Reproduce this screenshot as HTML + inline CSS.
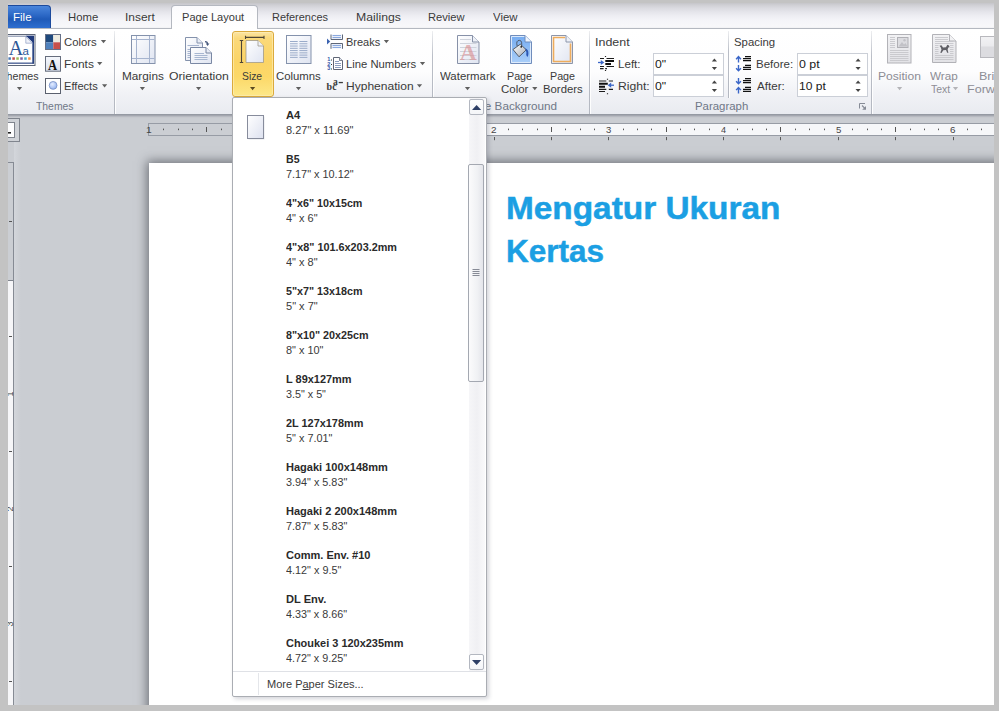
<!DOCTYPE html>
<html lang="id">
<head>
<meta charset="utf-8">
<title>Mengatur Ukuran Kertas</title>
<style>
html,body{margin:0;padding:0;}
body{width:999px;height:711px;overflow:hidden;background:#c3c3c3;font-family:"Liberation Sans",sans-serif;}
#w{position:absolute;left:0;top:0;width:999px;height:711px;overflow:hidden;background:#cacdd2;}
#w div,#w span,#w svg{position:absolute;}
.t{white-space:nowrap;line-height:1;transform-origin:0 0;z-index:5;}
.t.u{z-index:1;}
.rt{font-size:9px;color:#444;white-space:nowrap;line-height:1;z-index:1;}
#tabs{left:0;top:3px;width:999px;height:25px;background:linear-gradient(#c5c5c9 0,#cfcfd4 2px,#dadae0 5px,#e5e5eb 9px,#eeeef3 13px,#f4f4f8 17px,#f9f9fb 25px);}
#file{left:7px;top:5px;width:44px;height:23px;border-radius:0 4px 0 0;border:1px solid #1c4a9c;border-bottom:none;box-sizing:border-box;background:linear-gradient(#4a86dc 0,#2a66c4 45%,#1f5ab8 60%,#2e6ed0 100%);}
#atab{left:171px;top:5px;width:87px;height:24px;box-sizing:border-box;border:1px solid #b4b8c0;border-bottom:none;border-radius:4px 4px 0 0;background:linear-gradient(#fbfbfd,#ffffff);z-index:2;}
#rib{left:0;top:28px;width:999px;height:87px;box-sizing:border-box;border-top:1px solid #b4b8c0;border-bottom:1px solid #959aa3;background:linear-gradient(#ffffff 0,#fdfdfe 50%,#f1f2f6 75%,#e9ebf0 100%);box-shadow:0 1px 2px rgba(100,105,115,.55);}
.sep{top:31px;width:1px;height:83px;background:linear-gradient(rgba(185,189,198,.25),#babec7 30%,#b4b8c1 100%);box-shadow:1px 0 0 rgba(255,255,255,.9);}
#sizebtn{left:232px;top:31px;width:42px;height:66px;box-sizing:border-box;border:1px solid #dbaa3c;border-radius:3px;background:linear-gradient(#fbe4a2 0,#fbd97a 10%,#fbd466 45%,#fcd868 70%,#fde888 100%);box-shadow:inset 0 0 0 1px rgba(255,240,190,.6);}
.inp{box-sizing:border-box;border:1px solid #cbcfd7;background:#fff;width:71px;height:22px;}
#page{left:149px;top:163px;width:860px;height:560px;background:#fff;box-shadow:0 0 10px 2px rgba(50,54,62,.6);}
#hr{left:148px;top:123px;width:860px;height:13px;box-sizing:border-box;border:1px solid #979ca5;background:linear-gradient(90deg,#cbced3 0,#cbced3 116px,#f6f7f9 116px);}
#vr{left:0;top:162px;width:14px;height:560px;box-sizing:border-box;border:1px solid #868b94;background:linear-gradient(#cbced3 0,#cbced3 117px,#7f848d 117px,#7f848d 118px,#f6f6f8 118px);}
#tabsel{left:0;top:118px;width:20px;height:24px;box-sizing:border-box;border:1px solid #80858e;background:#cfd2d7;}
#tabsel2{left:0;top:122px;width:15px;height:16px;box-sizing:border-box;border:1px solid #80858e;background:#fdfdfe;}
#dd{left:232px;top:97px;width:255px;height:600px;box-sizing:border-box;border:1px solid #aaadb3;border-radius:2px;background:#fff;box-shadow:2px 2px 4px rgba(40,45,70,.2);z-index:3;}
#sbt{left:469px;top:98px;width:16px;height:573px;background:linear-gradient(90deg,#f6f6f8,#f0f0f3 50%,#f9f9fb);z-index:3;}
.sb{left:469px;width:15px;height:16px;box-sizing:border-box;border:1px solid #b3b7c0;border-radius:2px;background:linear-gradient(#ffffff,#f4f5f8);z-index:4;}
#thumb{left:468px;top:164px;width:16px;height:218px;box-sizing:border-box;border:1px solid #a4a8b1;border-radius:2px;background:linear-gradient(90deg,#fbfbfc,#f0f1f4 60%,#e4e5ea);z-index:4;}
#ddsep{left:233px;top:671px;width:253px;height:1px;background:#dfe1e6;z-index:4;}
#ddgut{left:258px;top:673px;width:1px;height:22px;background:#e4e6ea;z-index:4;}
.fr{background:#c3c3c3;z-index:20;}
#ic1{left:0;top:0;z-index:2;}
#ic2{left:0;top:0;z-index:6;}
</style>
</head>
<body>
<div id="w">
<div id="page"></div>
<div id="hr"></div>
<div id="vr"></div>
<div style="left:14px;top:142px;width:7px;height:570px;background:linear-gradient(90deg,#d3d6db,#cacdd2)"></div>
<div id="tabsel"></div>
<div id="tabsel2"></div>
<div id="tabs"></div>
<div id="rib"></div>
<div id="file"></div>
<div id="atab"></div>
<div class="sep" style="left:114px"></div>
<div class="sep" style="left:432px"></div>
<div class="sep" style="left:589px"></div>
<div class="sep" style="left:728px;height:67px"></div>
<div class="sep" style="left:871px"></div>
<div id="sizebtn"></div>
<div class="inp" style="left:653px;top:53px"></div>
<div class="inp" style="left:653px;top:75px"></div>
<div class="inp" style="left:797px;top:53px"></div>
<div class="inp" style="left:797px;top:75px"></div>
<svg id="ic1" width="999" height="711" viewBox="0 0 999 711">
<defs>
<linearGradient id="gp" x1="0" y1="0" x2="1" y2="1"><stop offset="0" stop-color="#ffffff"/><stop offset="1" stop-color="#dfe4f1"/></linearGradient>
<linearGradient id="gb" x1="0" y1="0" x2="0" y2="1"><stop offset="0" stop-color="#74abf1"/><stop offset="1" stop-color="#abcff9"/></linearGradient>
<linearGradient id="gf" x1="0" y1="0" x2="0" y2="1"><stop offset="0" stop-color="#f6f8fc"/><stop offset="1" stop-color="#d9e0ee"/></linearGradient>
<radialGradient id="gc" cx="0.4" cy="0.35" r="0.7"><stop offset="0" stop-color="#e6eeff"/><stop offset="1" stop-color="#8fb0f0"/></radialGradient>
<linearGradient id="gd" x1="0" y1="0" x2="0" y2="1"><stop offset="0" stop-color="#f2f2f4"/><stop offset="1" stop-color="#e2e2e6"/></linearGradient>
<linearGradient id="gbk" x1="0" y1="0" x2="1" y2="1"><stop offset="0" stop-color="#ffffff"/><stop offset="1" stop-color="#a8acb4"/></linearGradient>
</defs>
<rect x="3.5" y="34.5" width="31.5" height="31" fill="#fff" stroke="#5d6678"/>
<path d="M4,36.2 H33.9" stroke="#6a7898" stroke-width="0.9" fill="none"/>
<path d="M33.15,36 V63.6" stroke="#203a7c" stroke-width="1.6" fill="none"/><path d="M4,63.15 H33.9" stroke="#203a7c" stroke-width="1.1" fill="none"/>
<polygon points="25.8,35.8 33.9,35.8 33.9,43.6" fill="#203a7c"/>
<polygon points="25.8,36.6 25.8,43.2 32.4,43.2" fill="#eef1f8" stroke="#7d8fb8" stroke-width="0.6"/>
<text x="8.4" y="55" font-family="Liberation Serif,serif" font-size="20.5" fill="#2f5897">A</text>
<text x="22.4" y="55" font-family="Liberation Sans,sans-serif" font-size="11.5" fill="#2f5897">a</text>
<rect x="8.40" y="57.3" width="2.5" height="2.5" fill="#4a7ab8"/>
<rect x="12.35" y="57.3" width="2.5" height="2.5" fill="#c0504d"/>
<rect x="16.30" y="57.3" width="2.5" height="2.5" fill="#9bbb59"/>
<rect x="20.25" y="57.3" width="2.5" height="2.5" fill="#8064a2"/>
<rect x="24.20" y="57.3" width="2.5" height="2.5" fill="#4bacc6"/>
<rect x="28.15" y="57.3" width="2.5" height="2.5" fill="#f79646"/>
<polygon points="16.9,87.0 22.1,87.0 19.5,90.2" fill="#5f5f5f"/>
<rect x="46" y="35" width="7.3" height="7.3" fill="#1f497d"/><rect x="53.3" y="35" width="7.2" height="7.3" fill="#eeece1"/><rect x="46" y="42.3" width="7.3" height="7.2" fill="#4f81bd"/><rect x="53.3" y="42.3" width="7.2" height="7.2" fill="#c8504a"/>
<rect x="45.5" y="34.5" width="15" height="15" fill="none" stroke="#667088"/>
<polygon points="100.9,40.0 106.1,40.0 103.5,43.2" fill="#5f5f5f"/>
<rect x="45.5" y="56.5" width="15" height="14.7" fill="url(#gf)" stroke="#666d7d"/>
<text transform="translate(52.5,70) scale(0.84,1)" text-anchor="middle" font-family="Liberation Serif,serif" font-weight="bold" font-size="15" fill="#111">A</text>
<polygon points="97.1,62.1 102.3,62.1 99.7,65.3" fill="#5f5f5f"/>
<rect x="45.5" y="78.5" width="15" height="15" fill="#fff" stroke="#5a606e"/>
<circle cx="53.1" cy="85.4" r="3.9" fill="url(#gc)" stroke="#7f96c8" stroke-width="0.9"/>
<polygon points="102.0,84.2 107.2,84.2 104.6,87.4" fill="#5f5f5f"/>
<rect x="131.5" y="35.5" width="23.5" height="28" fill="url(#gp)" stroke="#8492ac"/>
<path d="M136.5,36 V63 M149.5,36 V63 M132,39.5 H154.5 M132,58.5 H154.5" stroke="#a6b4cf" fill="none"/>
<polygon points="139.8,87.0 145.0,87.0 142.4,90.2" fill="#5f5f5f"/>
<path d="M185.5,37.5 H197 L202.5,43 V60.5 H185.5 Z" fill="url(#gp)" stroke="#8492ac"/>
<path d="M197,37.5 V43 H202.5" fill="#e9edf6" stroke="#8492ac"/>
<path d="M187.5,45.5 H199 M187.5,49.5 H190 M187.5,51.5 H190 M187.5,53.5 H190 M187.5,55.5 H190 M187.5,57.5 H190" stroke="#a6b4cf" fill="none"/>
<path d="M190.5,47.5 H206 L211.5,53 V63.5 H190.5 Z" fill="url(#gp)" stroke="#7a88a4"/>
<path d="M206,47.5 V53 H211.5" fill="#e9edf6" stroke="#7a88a4"/>
<path d="M194.5,53.5 H204 M194.5,55.5 H207.5 M194.5,57.5 H207.5 M194.5,59.5 H207.5" stroke="#9fb0cc" fill="none" stroke-width="0.9"/>
<path d="M205,41.7 Q207.6,41.9 207.6,44" stroke="#46587c" fill="none" stroke-width="1.2"/><polygon points="205.8,43.5 209.4,43.5 207.6,46" fill="#46587c"/>
<polygon points="196.0,87.0 201.2,87.0 198.6,90.2" fill="#5f5f5f"/>
<path d="M246,40.5 H258 L263.5,46 V62.5 H246 Z" fill="url(#gp)" stroke="#9c9686" stroke-opacity="0.75"/>
<path d="M258,40.5 V46 H263.5" fill="#eef1f8" stroke="#9c9686" stroke-opacity="0.75"/>
<path d="M245.5,37.4 H264 M245.5,35.8 V39 M264,35.8 V39 M241.5,40.5 V62.5 M239.8,40.5 H243.2 M239.8,62.5 H243.2" stroke="#4d4536" fill="none" stroke-width="1.1"/>
<polygon points="250.0,87.0 255.2,87.0 252.6,90.2" fill="#5a4a20"/>
<rect x="286.5" y="35.5" width="24.5" height="28" fill="url(#gp)" stroke="#8492ac"/>
<path d="M290,41.50 H297.7 M299.4,41.50 H307.4 M290,43.77 H297.7 M299.4,43.77 H307.4 M290,46.04 H297.7 M299.4,46.04 H307.4 M290,48.31 H297.7 M299.4,48.31 H307.4 M290,50.58 H297.7 M299.4,50.58 H307.4 M290,52.85 H297.7 M299.4,52.85 H307.4 M290,55.12 H297.7 M299.4,55.12 H307.4 M290,57.39 H297.7 M299.4,57.39 H307.4 " stroke="#9aabc9" fill="none" stroke-width="1"/>
<polygon points="295.9,87.0 301.1,87.0 298.5,90.2" fill="#5f5f5f"/>
<polygon points="327,38.6 327,44.4 330.2,41.5" fill="#3a62b0"/>
<path d="M331,34.5 V39.5 H342.5 V34.5" fill="#f4f6fb" stroke="#5d6678"/>
<path d="M331,48.8 V43.5 H342.5 V48.8" fill="#f4f6fb" stroke="#5d6678"/>
<path d="M332.5,35.6 H341 M332.5,37.6 H341 M332.5,45.4 H341 M332.5,47.4 H341" stroke="#7fa0dc" fill="none" stroke-width="1"/>
<polygon points="383.8,40.0 389.0,40.0 386.4,43.2" fill="#5f5f5f"/>
<path d="M333.5,57.5 H339.5 L342.5,60.5 V69.5 H333.5 Z" fill="#fff" stroke="#5f6676"/>
<path d="M339.5,57.5 V60.5 H342.5" fill="#e6eaf3" stroke="#5f6676" stroke-width="0.8"/>
<path d="M335,61.5 H339 M335,63.5 H341 M335,65.5 H341 M335,67.5 H341" stroke="#7f93b8" fill="none" stroke-width="0.9"/>
<text font-family="Liberation Sans,sans-serif" font-weight="bold" font-size="5.6" fill="#3557a8"><tspan x="327.2" y="61.3">1</tspan><tspan x="327.2" y="65.8">2</tspan><tspan x="327.2" y="70.3">3</tspan></text>
<path d="M331.5,59.5 v1 M331.5,64 v1 M331.5,68.5 v1" stroke="#333" stroke-width="1"/>
<polygon points="419.9,62.1 425.1,62.1 422.5,65.3" fill="#5f5f5f"/>
<text x="326.5" y="90" font-family="Liberation Serif,serif" font-weight="bold" font-size="10" letter-spacing="0.3" fill="#3a3a3a">bc</text>
<text x="332.9" y="84.9" font-family="Liberation Serif,serif" font-weight="bold" font-size="9.5" fill="#3a3a3a">a</text>
<rect x="338.7" y="81.9" width="4.2" height="1.3" fill="#3a3a3a"/>
<polygon points="416.9,84.2 422.1,84.2 419.5,87.4" fill="#5f5f5f"/>
<path d="M457.5,35.5 H472.5 L479,42 V63.5 H457.5 Z" fill="url(#gp)" stroke="#8791a8"/>
<path d="M472.5,35.5 V42 H479" fill="#eef1f8" stroke="#8791a8"/>
<path d="M460,39.5 H471 M460,43.5 H476.5 M460,47.5 H476.5 M460,51.5 H476.5 M460,55.5 H476.5 M460,59.5 H476.5 " stroke="#cfd3dc" fill="none" stroke-width="1"/>
<text x="468.2" y="59.6" text-anchor="middle" font-family="Liberation Serif,serif" font-weight="bold" font-size="23.5" fill="#d98a8c" fill-opacity="0.62">A</text>
<polygon points="464.9,87.0 470.1,87.0 467.5,90.2" fill="#5f5f5f"/>
<path d="M510.5,35.5 H525 L531.5,42 V63.5 H510.5 Z" fill="url(#gb)" stroke="#6f8cbc"/>
<path d="M511.5,36.5 H524.6 L530.5,42.4 V62.5 H511.5 Z" fill="none" stroke="#e4eefc" stroke-width="0.9"/>
<path d="M525,35.5 V42 H531.5" fill="#eef4fd" stroke="#6f8cbc"/>
<path d="M513,49.5 L520.3,44.2 L526.3,49.8 L519,56.8 Z" fill="url(#gbk)" stroke="#4a4f5a" stroke-width="0.9"/>
<path d="M517.2,46 Q515.6,40.3 519.6,40.4 Q522.6,40.6 521.4,47.2" fill="none" stroke="#4a4f5a" stroke-width="0.9"/>
<circle cx="521.2" cy="46.8" r="0.9" fill="#222"/>
<path d="M525.2,48.6 Q528.4,49.4 528.4,53 Q528.4,57.2 527,56.6 Q525.8,55.8 526.4,52.2 Z" fill="#2b57b4"/>
<polygon points="532.2,87.0 537.4,87.0 534.8,90.2" fill="#5f5f5f"/>
<path d="M551.5,35.5 H566 L572.5,42 V63.5 H551.5 Z" fill="url(#gp)" stroke="#8d96aa"/>
<path d="M566,35.5 V42 H572.5" fill="#eef1f8" stroke="#8d96aa"/>
<path d="M565,37.5 H553.5 V61.5 H570.5 V43.5" fill="none" stroke="#eeac5c" stroke-width="1.6"/>
<path d="M605.5,56 V57 M605.5,70 V71" stroke="#222" stroke-width="1.2"/>
<path d="M600,58.5 H604 M606.5,58.5 H614 M600,66.5 H604 M606.5,66.5 H614 M600,68.6 H603.6 M605.2,68.6 H607" stroke="#1c1c1c" stroke-width="1.1" fill="none"/>
<path d="M605.3,61 H614 M605.3,63.9 H611" stroke="#111" stroke-width="2" fill="none"/>
<path d="M598,62.5 H602" stroke="#3a66c8" stroke-width="1.3"/><polygon points="600.8,59.9 604.3,62.5 600.8,65.1" fill="#3a66c8"/>
<path d="M607.5,78.7 V79.7 M607.5,93.2 V94.2" stroke="#222" stroke-width="1.2"/>
<path d="M599,81 H606.3 M608.8,81 H613 M599,89.4 H606.3 M608.8,89.4 H613 M599,91.5 H605" stroke="#1c1c1c" stroke-width="1.1" fill="none"/>
<path d="M599,83.8 H607.8 M599,86.7 H605" stroke="#111" stroke-width="2" fill="none"/>
<path d="M610,85.2 H614" stroke="#3a66c8" stroke-width="1.3"/><polygon points="611.2,82.6 607.7,85.2 611.2,87.8" fill="#3a66c8"/>
<polygon points="711.8,61.6 717.0,61.6 714.4,58.6" fill="#444"/>
<polygon points="711.8,67.0 717.0,67.0 714.4,70.0" fill="#444"/>
<polygon points="711.8,83.5 717.0,83.5 714.4,80.5" fill="#444"/>
<polygon points="711.8,88.9 717.0,88.9 714.4,91.9" fill="#444"/>
<polygon points="855.5,61.6 860.7,61.6 858.1,58.6" fill="#444"/>
<polygon points="855.5,67.0 860.7,67.0 858.1,70.0" fill="#444"/>
<polygon points="855.5,83.5 860.7,83.5 858.1,80.5" fill="#444"/>
<polygon points="855.5,88.9 860.7,88.9 858.1,91.9" fill="#444"/>
<path d="M745,56.5 H751 M743,58.5 H751 M743,60.5 H751 M745,65.3 H751 M743,67.3 H751 M743,69.3 H751 M745,78.6 H751 M743,80.6 H751 M743,82.6 H751 M745,87.4 H751 M743,89.4 H751 M743,91.4 H751 " stroke="#111" stroke-width="1.25" fill="none"/>
<path d="M738.5,56.8 V62.6 M736.1,59.2 L738.5,56.6 L740.9,59.2" stroke="#3a66c8" stroke-width="1.4" fill="none"/>
<path d="M738.5,65.1 V70.60000000000001 M736.1,68.2 L738.5,70.80000000000001 L740.9,68.2" stroke="#3a66c8" stroke-width="1.4" fill="none"/>
<path d="M738.5,78.1 V83.60000000000001 M736.1,81.2 L738.5,83.80000000000001 L740.9,81.2" stroke="#3a66c8" stroke-width="1.4" fill="none"/>
<path d="M738.5,87.7 V93.6 M736.1,90.10000000000001 L738.5,87.5 L740.9,90.10000000000001" stroke="#3a66c8" stroke-width="1.4" fill="none"/>
<path d="M865,103.5 H859.5 V108.5" stroke="#868b96" fill="none"/><path d="M862,105.5 L865,108.5" stroke="#868b96" stroke-width="1.1"/><polygon points="866,106 866,109.8 862.2,109.8" fill="#868b96"/>
<rect x="887.5" y="34.5" width="23.5" height="28.5" fill="url(#gd)" stroke="#b2b2b7"/>
<path d="M890,37.5 H895 M890,39.5 H895 M890,41.5 H895 M890,43.5 H895 M890,45.5 H895 M890,47.5 H895 M890,50.5 H908.5 M890,52.5 H908.5 M890,54.5 H908.5 M890,56.5 H908.5 M890,58.5 H908.5 M890,60.5 H908.5 " stroke="#c6c6cb" fill="none" stroke-width="0.9"/>
<rect x="897.5" y="37.5" width="10.5" height="10" fill="#dcdce0" stroke="#b0b0b5"/><path d="M898.5,46.5 L902,42 L904,44.5 L905.5,43 L907.5,46.5 Z" fill="#c2c2c7"/><circle cx="904.5" cy="40.3" r="1.2" fill="#c2c2c7"/>
<polygon points="897.0,87.0 902.2,87.0 899.6,90.2" fill="#b4b4b8"/>
<path d="M932.5,34.5 H949.5 L956,41 V62.5 H932.5 Z" fill="url(#gd)" stroke="#b2b2b7"/>
<path d="M949.5,34.5 V41 H956" fill="#f2f2f4" stroke="#b2b2b7"/>
<path d="M935,37.5 H948 M935,39.5 H948 M935,41.5 H953.5 M935,43.5 H953.5 M935,55.5 H953.5 M935,57.5 H953.5 M935,59.5 H953.5 M935,45.5 H938.5 M950,45.5 H953.5 M935,47.5 H938.5 M950,47.5 H953.5 M935,49.5 H938.5 M950,49.5 H953.5 M935,51.5 H938.5 M950,51.5 H953.5 M935,53.5 H938.5 M950,53.5 H953.5 " stroke="#c6c6cb" fill="none" stroke-width="0.9"/>
<path d="M939.5,45.8 L941.5,45.3 L943,47.5 L946,47.3 L947.3,44.8 L949,45.5 L949.5,47.3 L948.3,47.6 L947.6,49.5 L948.4,52.8 L947.2,52.8 L946,50 L943.3,50.2 L941.5,52.9 L940.3,52.7 L941.5,49.6 L940.8,47.6 Z" fill="#606066"/>
<polygon points="952.9,87.0 958.1,87.0 955.5,90.2" fill="#b4b4b8"/>
<rect x="980.5" y="36.5" width="22" height="21" fill="url(#gd)" stroke="#b8b8bd"/>
<rect x="981" y="46.5" width="21" height="10.5" fill="#dcdce0"/>
<path d="M163.5,128.6 V130.2 M178.5,128.6 V130.2 M192.5,128.6 V130.2 M221.5,128.6 V130.2 M235.5,128.6 V130.2 M250.5,128.6 V130.2 M278.5,128.6 V130.2 M293.5,128.6 V130.2 M307.5,128.6 V130.2 M336.5,128.6 V130.2 M350.5,128.6 V130.2 M364.5,128.6 V130.2 M393.5,128.6 V130.2 M407.5,128.6 V130.2 M422.5,128.6 V130.2 M450.5,128.6 V130.2 M465.5,128.6 V130.2 M479.5,128.6 V130.2 M508.5,128.6 V130.2 M522.5,128.6 V130.2 M537.5,128.6 V130.2 M565.5,128.6 V130.2 M580.5,128.6 V130.2 M594.5,128.6 V130.2 M623.5,128.6 V130.2 M637.5,128.6 V130.2 M651.5,128.6 V130.2 M680.5,128.6 V130.2 M694.5,128.6 V130.2 M709.5,128.6 V130.2 M737.5,128.6 V130.2 M752.5,128.6 V130.2 M766.5,128.6 V130.2 M795.5,128.6 V130.2 M809.5,128.6 V130.2 M824.5,128.6 V130.2 M852.5,128.6 V130.2 M867.5,128.6 V130.2 M881.5,128.6 V130.2 M910.5,128.6 V130.2 M924.5,128.6 V130.2 M938.5,128.6 V130.2 M967.5,128.6 V130.2 M981.5,128.6 V130.2 M996.5,128.6 V130.2 " stroke="#555" stroke-width="1" fill="none"/><path d="M206.5,127 V132 M321.5,127 V132 M436.5,127 V132 M551.5,127 V132 M666.5,127 V132 M780.5,127 V132 M895.5,127 V132 " stroke="#555" stroke-width="1" fill="none"/><path d="M264.5,137 V140.2 M321.5,137 V140.2 M379.5,137 V140.2 M436.5,137 V140.2 M494.5,137 V140.2 M551.5,137 V140.2 M608.5,137 V140.2 M666.5,137 V140.2 M723.5,137 V140.2 M780.5,137 V140.2 M838.5,137 V140.2 M895.5,137 V140.2 M953.5,137 V140.2 M1010.5,137 V140.2 M1068.5,137 V140.2 M1125.5,137 V140.2 " stroke="#5a5a5a" stroke-width="1" fill="none"/>
<path d="M9,221.5 H12 M9,336.5 H12 M9,451.5 H12 M9,566.5 H12 M9,681.5 H12 M9,796.5 H12 " stroke="#555" stroke-width="1" fill="none"/>
<text transform="translate(13.2,396.4) rotate(-90)" font-family="Liberation Sans,sans-serif" font-size="9" fill="#454545">1</text>
<text transform="translate(13.2,511.4) rotate(-90)" font-family="Liberation Sans,sans-serif" font-size="9" fill="#454545">2</text>
<text transform="translate(13.2,626.4) rotate(-90)" font-family="Liberation Sans,sans-serif" font-size="9" fill="#454545">3</text>
<text transform="translate(13.2,741.4) rotate(-90)" font-family="Liberation Sans,sans-serif" font-size="9" fill="#454545">4</text>
<path d="M7,132.8 H11" stroke="#222" stroke-width="1.6" fill="none"/>
</svg>
<div id="dd"></div>
<div id="sbt"></div>
<div class="sb" style="top:99px"></div>
<div class="sb" style="top:654px"></div>
<div id="thumb"></div>
<div id="ddsep"></div>
<div id="ddgut"></div>
<svg id="ic2" width="999" height="711" viewBox="0 0 999 711">
<defs><linearGradient id="gt" x1="0" y1="0" x2="1" y2="1"><stop offset="0" stop-color="#ffffff"/><stop offset="1" stop-color="#dde1ef"/></linearGradient></defs>
<rect x="248.5" y="116.5" width="16" height="23" fill="#d5d7dd" opacity="0.6"/>
<rect x="247.5" y="115.5" width="16" height="23" fill="url(#gt)" stroke="#878c9c"/>
<polygon points="472,110 481.2,110 476.6,105" fill="#2e3f66"/>
<polygon points="472,660 481.2,660 476.6,665" fill="#2e3f66"/>
<path d="M472.5,269.5 H479.5 M472.5,271.5 H479.5 M472.5,273.5 H479.5 M472.5,275.5 H479.5" stroke="#878b96" stroke-width="1" fill="none"/>
</svg>
<span class="t" style="left:13.46px;top:11.69px;font-size:11px;transform:scaleX(1.0454);color:#ffffff;">File</span>
<span class="t" style="left:67.57px;top:11.69px;font-size:11px;transform:scaleX(1.0295);color:#3a3a3a;">Home</span>
<span class="t" style="left:124.72px;top:11.69px;font-size:11px;transform:scaleX(1.0849);color:#3a3a3a;">Insert</span>
<span class="t" style="left:182.39px;top:11.69px;font-size:11px;transform:scaleX(1.0063);color:#3a3a3a;">Page Layout</span>
<span class="t" style="left:272.40px;top:11.69px;font-size:11px;transform:scaleX(0.9945);color:#3a3a3a;">References</span>
<span class="t" style="left:356.00px;top:11.69px;font-size:11px;transform:scaleX(1.1126);color:#3a3a3a;">Mailings</span>
<span class="t" style="left:428.39px;top:11.69px;font-size:11px;transform:scaleX(1.0135);color:#3a3a3a;">Review</span>
<span class="t" style="left:493.00px;top:11.69px;font-size:11px;transform:scaleX(1.0338);color:#3a3a3a;">View</span>
<span class="t" style="left:0.41px;top:70.69px;font-size:11px;transform:scaleX(0.9723);color:#3a3a3a;">Themes</span>
<span class="t" style="left:63.94px;top:36.69px;font-size:11px;transform:scaleX(1.0264);color:#3a3a3a;">Colors</span>
<span class="t" style="left:63.52px;top:58.69px;font-size:11px;transform:scaleX(1.0853);color:#3a3a3a;">Fonts</span>
<span class="t" style="left:63.59px;top:80.69px;font-size:11px;transform:scaleX(1.0101);color:#3a3a3a;">Effects</span>
<span class="t" style="left:36.11px;top:100.69px;font-size:11px;transform:scaleX(0.9442);color:#6f7787;">Themes</span>
<span class="t" style="left:121.84px;top:70.69px;font-size:11px;transform:scaleX(1.0694);color:#3a3a3a;">Margins</span>
<span class="t" style="left:169.34px;top:70.69px;font-size:11px;transform:scaleX(1.1132);color:#3a3a3a;">Orientation</span>
<span class="t" style="left:241.98px;top:70.69px;font-size:11px;transform:scaleX(0.9375);color:#3a3a3a;">Size</span>
<span class="t" style="left:276.03px;top:70.69px;font-size:11px;transform:scaleX(1.0305);color:#3a3a3a;">Columns</span>
<span class="t" style="left:345.70px;top:36.69px;font-size:11px;transform:scaleX(0.9974);color:#3a3a3a;">Breaks</span>
<span class="t" style="left:345.68px;top:58.69px;font-size:11px;transform:scaleX(1.0249);color:#3a3a3a;">Line Numbers</span>
<span class="t" style="left:345.61px;top:80.69px;font-size:11px;transform:scaleX(1.0947);color:#3a3a3a;">Hyphenation</span>
<span class="t" style="left:440.30px;top:70.69px;font-size:11px;transform:scaleX(1.0389);color:#3a3a3a;">Watermark</span>
<span class="t" style="left:507.02px;top:70.69px;font-size:11px;transform:scaleX(0.9744);color:#3a3a3a;">Page</span>
<span class="t" style="left:501.43px;top:83.69px;font-size:11px;transform:scaleX(1.0441);color:#3a3a3a;">Color</span>
<span class="t" style="left:549.72px;top:70.69px;font-size:11px;transform:scaleX(0.9744);color:#3a3a3a;">Page</span>
<span class="t" style="left:542.97px;top:83.69px;font-size:11px;transform:scaleX(1.0304);color:#3a3a3a;">Borders</span>
<span class="t u" style="left:463.94px;top:100.69px;font-size:11px;transform:scaleX(1.0642);color:#6f7787;">Page Background</span>
<span class="t" style="left:595.17px;top:36.69px;font-size:11px;transform:scaleX(1.1312);color:#3a3a3a;">Indent</span>
<span class="t" style="left:617.85px;top:58.69px;font-size:11px;transform:scaleX(1.0538);color:#3a3a3a;">Left:</span>
<span class="t" style="left:617.81px;top:80.69px;font-size:11px;transform:scaleX(1.1049);color:#3a3a3a;">Right:</span>
<span class="t" style="left:655.35px;top:58.69px;font-size:11px;transform:scaleX(1.1126);color:#1a1a1a;">0&quot;</span>
<span class="t" style="left:655.35px;top:80.69px;font-size:11px;transform:scaleX(1.1126);color:#1a1a1a;">0&quot;</span>
<span class="t" style="left:694.87px;top:100.69px;font-size:11px;transform:scaleX(1.0361);color:#6f7787;">Paragraph</span>
<span class="t" style="left:734.14px;top:36.69px;font-size:11px;transform:scaleX(1.0328);color:#3a3a3a;">Spacing</span>
<span class="t" style="left:755.86px;top:58.69px;font-size:11px;transform:scaleX(1.0473);color:#3a3a3a;">Before:</span>
<span class="t" style="left:756.80px;top:80.69px;font-size:11px;transform:scaleX(1.0541);color:#3a3a3a;">After:</span>
<span class="t" style="left:799.15px;top:58.69px;font-size:11px;transform:scaleX(1.1290);color:#1a1a1a;">0 pt</span>
<span class="t" style="left:798.72px;top:80.69px;font-size:11px;transform:scaleX(1.0970);color:#1a1a1a;">10 pt</span>
<span class="t" style="left:878.41px;top:70.69px;font-size:11px;transform:scaleX(1.0967);color:#8d8d95;">Position</span>
<span class="t" style="left:930.20px;top:70.69px;font-size:11px;transform:scaleX(1.0637);color:#8d8d95;">Wrap</span>
<span class="t" style="left:930.61px;top:83.69px;font-size:11px;transform:scaleX(0.9489);color:#8d8d95;">Text</span>
<span class="t" style="left:978.67px;top:70.69px;font-size:11px;transform:scaleX(1.1400);color:#8d8d95;">Bring</span>
<span class="t" style="left:967.47px;top:83.69px;font-size:11px;transform:scaleX(1.1400);color:#8d8d95;">Forward</span>
<span class="t" style="left:505.51px;top:192.54px;font-size:31.5px;transform:scaleX(1.0593);color:#1b9fe3;font-weight:bold;-webkit-text-stroke:0.5px #1b9fe3;">Mengatur Ukuran</span>
<span class="t" style="left:505.63px;top:235.94px;font-size:31.5px;transform:scaleX(0.9989);color:#1b9fe3;font-weight:bold;-webkit-text-stroke:0.5px #1b9fe3;">Kertas</span>
<span class="t" style="left:266.70px;top:678.69px;font-size:11px;transform:scaleX(1.0007);color:#3a3a3a;">More P<u>a</u>per Sizes...</span>
<span class="t u" style="left:146.36px;top:125.78px;font-size:9px;transform:scaleX(1.1400);color:#454545;">1</span>
<span class="t u" style="left:376.16px;top:125.78px;font-size:9px;transform:scaleX(1.1400);color:#454545;">1</span>
<span class="t u" style="left:491.20px;top:125.78px;font-size:9px;transform:scaleX(1.1084);color:#454545;">2</span>
<span class="t u" style="left:605.98px;top:125.78px;font-size:9px;transform:scaleX(1.0575);color:#454545;">3</span>
<span class="t u" style="left:720.70px;top:125.78px;font-size:9px;transform:scaleX(1.0110);color:#454545;">4</span>
<span class="t u" style="left:835.73px;top:125.78px;font-size:9px;transform:scaleX(1.0698);color:#454545;">5</span>
<span class="t u" style="left:950.41px;top:125.78px;font-size:9px;transform:scaleX(1.0952);color:#454545;">6</span>
<span class="t" style="left:286.15px;top:109.69px;font-size:11px;transform:scaleX(1.0149);color:#2a2a2a;font-weight:bold;">A4</span>
<span class="t" style="left:285.95px;top:124.69px;font-size:11px;transform:scaleX(0.9994);color:#3a3a3a;">8.27&quot; x 11.69&quot;</span>
<span class="t" style="left:285.73px;top:153.69px;font-size:11px;transform:scaleX(0.9623);color:#2a2a2a;font-weight:bold;">B5</span>
<span class="t" style="left:285.86px;top:168.69px;font-size:11px;transform:scaleX(0.9888);color:#3a3a3a;">7.17&quot; x 10.12&quot;</span>
<span class="t" style="left:286.25px;top:197.69px;font-size:11px;transform:scaleX(0.9755);color:#2a2a2a;font-weight:bold;">4&quot;x6&quot; 10x15cm</span>
<span class="t" style="left:286.15px;top:212.69px;font-size:11px;transform:scaleX(0.9983);color:#3a3a3a;">4&quot; x 6&quot;</span>
<span class="t" style="left:286.25px;top:241.69px;font-size:11px;transform:scaleX(0.9862);color:#2a2a2a;font-weight:bold;">4&quot;x8&quot; 101.6x203.2mm</span>
<span class="t" style="left:286.15px;top:256.69px;font-size:11px;transform:scaleX(0.9983);color:#3a3a3a;">4&quot; x 8&quot;</span>
<span class="t" style="left:286.11px;top:285.69px;font-size:11px;transform:scaleX(0.9774);color:#2a2a2a;font-weight:bold;">5&quot;x7&quot; 13x18cm</span>
<span class="t" style="left:286.00px;top:300.69px;font-size:11px;transform:scaleX(1.0032);color:#3a3a3a;">5&quot; x 7&quot;</span>
<span class="t" style="left:286.11px;top:329.69px;font-size:11px;transform:scaleX(0.9777);color:#2a2a2a;font-weight:bold;">8&quot;x10&quot; 20x25cm</span>
<span class="t" style="left:285.95px;top:344.69px;font-size:11px;transform:scaleX(0.9927);color:#3a3a3a;">8&quot; x 10&quot;</span>
<span class="t" style="left:285.70px;top:373.69px;font-size:11px;transform:scaleX(0.9959);color:#2a2a2a;font-weight:bold;">L 89x127mm</span>
<span class="t" style="left:286.01px;top:388.69px;font-size:11px;transform:scaleX(0.9781);color:#3a3a3a;">3.5&quot; x 5&quot;</span>
<span class="t" style="left:286.05px;top:417.69px;font-size:11px;transform:scaleX(0.9903);color:#2a2a2a;font-weight:bold;">2L 127x178mm</span>
<span class="t" style="left:286.00px;top:432.69px;font-size:11px;transform:scaleX(0.9893);color:#3a3a3a;">5&quot; x 7.01&quot;</span>
<span class="t" style="left:285.70px;top:461.69px;font-size:11px;transform:scaleX(1.0027);color:#2a2a2a;font-weight:bold;">Hagaki 100x148mm</span>
<span class="t" style="left:286.01px;top:476.69px;font-size:11px;transform:scaleX(0.9839);color:#3a3a3a;">3.94&quot; x 5.83&quot;</span>
<span class="t" style="left:285.70px;top:505.69px;font-size:11px;transform:scaleX(1.0027);color:#2a2a2a;font-weight:bold;">Hagaki 2 200x148mm</span>
<span class="t" style="left:285.86px;top:520.69px;font-size:11px;transform:scaleX(0.9864);color:#3a3a3a;">7.87&quot; x 5.83&quot;</span>
<span class="t" style="left:285.95px;top:549.69px;font-size:11px;transform:scaleX(1.0037);color:#2a2a2a;font-weight:bold;">Comm. Env. #10</span>
<span class="t" style="left:286.15px;top:564.69px;font-size:11px;transform:scaleX(0.9852);color:#3a3a3a;">4.12&quot; x 9.5&quot;</span>
<span class="t" style="left:285.69px;top:593.69px;font-size:11px;transform:scaleX(1.0084);color:#2a2a2a;font-weight:bold;">DL Env.</span>
<span class="t" style="left:286.15px;top:608.69px;font-size:11px;transform:scaleX(0.9815);color:#3a3a3a;">4.33&quot; x 8.66&quot;</span>
<span class="t" style="left:285.95px;top:637.69px;font-size:11px;transform:scaleX(0.9959);color:#2a2a2a;font-weight:bold;">Choukei 3 120x235mm</span>
<span class="t" style="left:286.15px;top:652.69px;font-size:11px;transform:scaleX(0.9815);color:#3a3a3a;">4.72&quot; x 9.25&quot;</span>
<div class="fr" style="left:0;top:0;width:8px;height:711px"></div>
<div class="fr" style="left:994px;top:0;width:5px;height:711px"></div>
<div class="fr" style="left:0;top:0;width:999px;height:3px"></div>
<div class="fr" style="left:0;top:705px;width:999px;height:6px"></div>
</div>
</body>
</html>
